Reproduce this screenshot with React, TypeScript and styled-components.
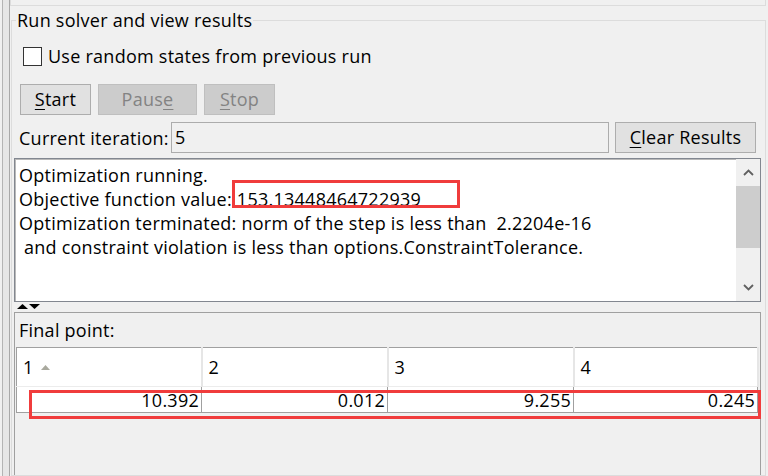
import React from "react";
import styled, { createGlobalStyle } from "styled-components";

const GlobalStyle = createGlobalStyle`
  html, body {
    margin: 0;
    padding: 0;
    background: #f0f0f0;
  }
  body {
    font-family: "Open Sans", "Noto Sans", "Liberation Sans", sans-serif;
    font-size: 18px;
    letter-spacing: 0.25px;
    color: #000;
  }
  * {
    box-sizing: border-box;
  }
`;

const columns = [
  { label: "1", value: "10.392", width: 185, sorted: true },
  { label: "2", value: "0.012", width: 186 },
  { label: "3", value: "9.255", width: 186 },
  { label: "4", value: "0.245", width: 184 },
];

const logLines = [
  "Optimization running.",
  "Objective function value: 153.13448464722939",
  "Optimization terminated: norm of the step is less than  2.2204e-16",
  " and constraint violation is less than options.ConstraintTolerance.",
];

function Chevron({ up }: { up?: boolean }) {
  return (
    <svg width="11" height="7" viewBox="0 0 11 7">
      <polyline
        points={up ? "1,6 5.5,1.5 10,6" : "1,1 5.5,5.5 10,1"}
        fill="none"
        stroke="#606060"
        strokeWidth="1.8"
      />
    </svg>
  );
}

function SortArrow() {
  return (
    <svg width="9" height="5" viewBox="0 0 9 5">
      <polygon points="0,5 4.5,0 9,5" fill="#a9a99e" />
    </svg>
  );
}

function SplitterArrows() {
  return (
    <svg width="24" height="6" viewBox="0 0 24 6">
      <polygon points="0,5 5.5,0 11,5" fill="#000" />
      <polygon points="12,0 23,0 17.5,5" fill="#000" />
    </svg>
  );
}

function App() {
  return (
    <>
      <GlobalStyle />
      <Frame>
        <LeftRail />
        <Content>
          <TopStub />
          <GroupBox>
            <Legend>Run solver and view results</Legend>
            <CheckRow>
              <CheckBox />
              <span>Use random states from previous run</span>
            </CheckRow>
            <ButtonRow>
              <Button $width={71}>
                <u>S</u>tart
              </Button>
              <Button $width={99} disabled>
                Paus<u>e</u>
              </Button>
              <Button $width={71} disabled>
                <u>S</u>top
              </Button>
            </ButtonRow>
            <IterationRow>
              <IterationLabel>Current iteration:</IterationLabel>
              <IterationField>5</IterationField>
              <Button $width={141}>
                <u>C</u>lear Results
              </Button>
            </IterationRow>
            <OutputPane>
              <OutputText>
                {logLines.map((line) => (
                  <div key={line}>{line}</div>
                ))}
              </OutputText>
              <Scrollbar>
                <ScrollButton>
                  <Chevron up />
                </ScrollButton>
                <ScrollTrack>
                  <ScrollThumb />
                </ScrollTrack>
                <ScrollButton>
                  <Chevron />
                </ScrollButton>
              </Scrollbar>
              <Highlight $left={217} $top={21} $width={228} $height={28} />
            </OutputPane>
            <Splitter>
              <SplitterArrows />
            </Splitter>
            <ResultsPanel>
              <PanelTitle>Final point:</PanelTitle>
              <ResultTable>
                <thead>
                  <tr>
                    {columns.map((c) => (
                      <HeadCell key={c.label} style={{ width: c.width }}>
                        <HeadLabel>
                          {c.label}
                          {c.sorted && <SortArrow />}
                        </HeadLabel>
                      </HeadCell>
                    ))}
                  </tr>
                </thead>
                <tbody>
                  <tr>
                    {columns.map((c) => (
                      <DataCell key={c.label}>{c.value}</DataCell>
                    ))}
                  </tr>
                </tbody>
              </ResultTable>
              <Highlight $left={14} $top={77} $width={732} $height={29} />
            </ResultsPanel>
          </GroupBox>
        </Content>
      </Frame>
    </>
  );
}

export default App;

const Frame = styled.div`
  width: 768px;
  height: 476px;
  display: flex;
  overflow: hidden;
  background: #f0f0f0;
`;

const LeftRail = styled.div`
  width: 8px;
  margin-left: 2px;
  border-left: 1px solid #b4b4b4;
  border-right: 1px solid #a8a8a8;
  background: #e6e6e6;
`;

const Content = styled.div`
  flex: 1;
  display: flex;
  flex-direction: column;
  min-width: 0;
`;

const TopStub = styled.div`
  height: 6px;
  margin-right: 2px;
  border: 1px solid #dcdcdc;
  border-top: none;
`;

const GroupBox = styled.fieldset`
  flex: 1;
  margin: 2px 2px 0 1px;
  padding: 0;
  border: 1px solid #dcdcdc;
  min-width: 0;
  display: flex;
  flex-direction: column;
`;

const Legend = styled.legend`
  margin-left: 4px;
  padding: 0 1px;
  line-height: 24px;
`;

const CheckRow = styled.label`
  display: flex;
  align-items: center;
  gap: 6px;
  height: 24px;
  margin-top: 12px;
  padding-left: 11px;
`;

const CheckBox = styled.span`
  width: 19px;
  height: 19px;
  border: 1px solid #333;
  background: #fff;
`;

const ButtonRow = styled.div`
  display: flex;
  gap: 7px;
  margin-top: 16px;
  padding-left: 8px;
`;

const Button = styled.button<{ $width: number }>`
  width: ${(p) => p.$width}px;
  height: 31px;
  padding: 0 0 1px;
  font: inherit;
  letter-spacing: inherit;
  line-height: 1;
  color: #000;
  background: #e1e1e1;
  border: 1px solid #adadad;
  flex-shrink: 0;

  &:disabled {
    color: #838383;
    background: #cccccc;
    border-color: #bfbfbf;
  }

  u {
    text-decoration-thickness: 1px;
    text-underline-offset: 3px;
  }
`;

const IterationRow = styled.div`
  display: flex;
  align-items: center;
  gap: 6px;
  height: 31px;
  margin-top: 7px;
  padding: 0 9px 0 7px;
`;

const IterationLabel = styled.span`
  width: 146px;
  white-space: nowrap;
`;

const IterationField = styled.div`
  flex: 1;
  height: 31px;
  line-height: 29px;
  padding-left: 3px;
  border: 1px solid #acacac;
  background: #f0f0f0;
`;

const OutputPane = styled.div`
  position: relative;
  display: flex;
  height: 144px;
  margin: 5px 4px 0 2px;
  border: 1px solid #828790;
  box-shadow: inset 1px 1px 0 #b9b9b9;
  background: #fff;
`;

const OutputText = styled.div`
  flex: 1;
  padding: 4px 0 0 4px;
  line-height: 24px;
  white-space: pre;
  overflow: hidden;
`;

const Scrollbar = styled.div`
  width: 24px;
  display: flex;
  flex-direction: column;
  background: #f0f0f0;
`;

const ScrollButton = styled.div`
  height: 27px;
  display: flex;
  align-items: center;
  justify-content: center;
`;

const ScrollTrack = styled.div`
  flex: 1;
`;

const ScrollThumb = styled.div`
  height: 62px;
  background: #cdcdcd;
`;

const Highlight = styled.div<{
  $left: number;
  $top: number;
  $width: number;
  $height: number;
}>`
  position: absolute;
  left: ${(p) => p.$left}px;
  top: ${(p) => p.$top}px;
  width: ${(p) => p.$width}px;
  height: ${(p) => p.$height}px;
  border: 3px solid #f03c3c;
  pointer-events: none;
`;

const Splitter = styled.div`
  height: 10px;
  display: flex;
  align-items: center;
  padding-left: 5px;
`;

const ResultsPanel = styled.div`
  position: relative;
  flex: 1;
  margin: 0 4px 0 2px;
  border: 1px solid #a0a0a0;
  border-bottom: none;
  display: flex;
  flex-direction: column;
`;

const PanelTitle = styled.div`
  height: 34px;
  line-height: 34px;
  padding-left: 4px;
`;

const ResultTable = styled.table`
  width: 741px;
  margin-left: 1px;
  border-collapse: collapse;
  table-layout: fixed;
  border-top: 1px solid #a0a0a0;
  border-left: 1px solid #a0a0a0;
`;

const HeadCell = styled.th`
  height: 39px;
  padding: 0 0 0 6px;
  background: #fff;
  font-weight: normal;
  text-align: left;
  border-right: 2px solid #e6e6e6;
  border-bottom: 1px solid #ececec;
`;

const HeadLabel = styled.span`
  display: inline-flex;
  align-items: center;
  gap: 7px;
`;

const DataCell = styled.td`
  height: 26px;
  padding: 0 2px 0 0;
  background: #fff;
  text-align: right;
  border-right: 1px solid #a0a0a0;
  border-bottom: 1px solid #a0a0a0;
`;
